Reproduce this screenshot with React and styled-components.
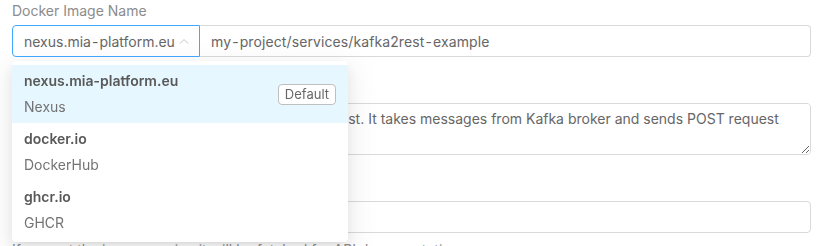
import React from "react";
import styled, { createGlobalStyle } from "styled-components";

const Global = createGlobalStyle`
  body {
    margin: 0;
    background: #fff;
    font-family: Inter, "Noto Sans", sans-serif;
    font-size: 14px;
    color: #666;
  }
`;

const registries = [
  { host: "nexus.mia-platform.eu", name: "Nexus", isDefault: true },
  { host: "docker.io", name: "DockerHub" },
  { host: "ghcr.io", name: "GHCR" },
];

// the input values render their hyphens with a little air around them
function Spaced({ text }) {
  const parts = text.split("-");
  return parts.map((p, i) => (
    <React.Fragment key={i}>
      {p}
      {i < parts.length - 1 && <Dash>-</Dash>}
    </React.Fragment>
  ));
}

function App() {
  return (
    <Page>
      <Global />
      <Field>
        <Label>Docker Image Name</Label>
        <Group>
          <Select>
            <Value>
              <Spaced text="nexus.mia-platform.eu" />
            </Value>
            <Arrow viewBox="0 0 10 6">
              <path d="M1 5.5 L5 1.5 L9 5.5" fill="none" stroke="#c4c4c4" strokeWidth="1" />
            </Arrow>
          </Select>
          <Input>
            <Value wide>
              <Spaced text="my-project/services/kafka2rest-example" />
            </Value>
          </Input>
          <Menu>
            {registries.map((r) => (
              <Option key={r.host} active={r.isDefault}>
                <OptionText>
                  <Host>{r.host}</Host>
                  <Name>{r.name}</Name>
                </OptionText>
                {r.isDefault && <Badge>Default</Badge>}
              </Option>
            ))}
          </Menu>
        </Group>
      </Field>
      <Field>
        <Label>Description</Label>
        <TextArea
          readOnly
          value="Example microservice generated by the kafka2rest. It takes messages from Kafka broker and sends POST request towards a REST endpoint."
        />
      </Field>
      <Field>
        <Label>API Documentation Path</Label>
        <Box />
        <Help>If you set the image version it will be fetched for API documentation</Help>
      </Field>
    </Page>
  );
}

export default App;

const Page = styled.div`
  padding: 0 10px 0 12px;
  display: flex;
  flex-direction: column;
  gap: 21px;
`;

const Field = styled.div`
  display: flex;
  flex-direction: column;
`;

const Label = styled.div`
  line-height: 22px;
  color: #8c8c8c;
  margin-bottom: 3px;
`;

const Group = styled.div`
  position: relative;
  display: flex;
  height: 32px;
`;

const Select = styled.div`
  width: 188px;
  box-sizing: border-box;
  border: 1px solid #40a9ff;
  border-radius: 4px 0 0 4px;
  display: flex;
  align-items: center;
  justify-content: space-between;
  padding: 0 10px 0 11px;
  position: relative;
  z-index: 1;
`;

const Value = styled.span`
  color: #666;
  letter-spacing: ${(p) => (p.wide ? "0.1px" : "0")};
  white-space: nowrap;
`;

const Dash = styled.span`
  margin: 0 1px;
`;

const Arrow = styled.svg`
  width: 10px;
  height: 6px;
  flex-shrink: 0;
`;

const Input = styled.div`
  flex: 1;
  box-sizing: border-box;
  border: 1px solid #d9d9d9;
  border-left: none;
  border-radius: 0 4px 4px 0;
  display: flex;
  align-items: center;
  padding: 0 11px;
`;

const Menu = styled.div`
  position: absolute;
  top: 36px;
  left: 0;
  width: 336px;
  background: #fff;
  border-radius: 4px;
  box-shadow: 0 3px 6px -4px rgba(0, 0, 0, 0.12), 0 6px 16px 0 rgba(0, 0, 0, 0.08),
    0 9px 28px 8px rgba(0, 0, 0, 0.05);
  padding: 4px 0 3px;
  z-index: 10;
`;

const Option = styled.div`
  display: flex;
  align-items: center;
  justify-content: space-between;
  padding: 5px 12px;
  background: ${(p) => (p.active ? "#e6f7ff" : "transparent")};
`;

const OptionText = styled.div`
  display: flex;
  flex-direction: column;
  gap: 4px;
`;

const Host = styled.div`
  line-height: 22px;
  font-weight: 600;
  color: #595959;
`;

const Name = styled.div`
  line-height: 22px;
  color: #737373;
`;

const Badge = styled.span`
  border: 1px solid #bfbfbf;
  border-radius: 4px;
  background: #fff;
  font-size: 13px;
  line-height: 19px;
  padding: 0 6px;
  color: #666;
`;

const TextArea = styled.textarea`
  height: 52px;
  box-sizing: border-box;
  border: 1px solid #d9d9d9;
  border-radius: 4px;
  padding: 4px 11px;
  font-family: inherit;
  font-size: 14px;
  line-height: 22px;
  color: #666;
  resize: vertical;
  outline: none;
`;

const Box = styled.div`
  height: 32px;
  box-sizing: border-box;
  border: 1px solid #d9d9d9;
  border-radius: 4px;
`;

const Help = styled.div`
  margin-top: 6px;
  line-height: 22px;
  color: #8c8c8c;
`;
